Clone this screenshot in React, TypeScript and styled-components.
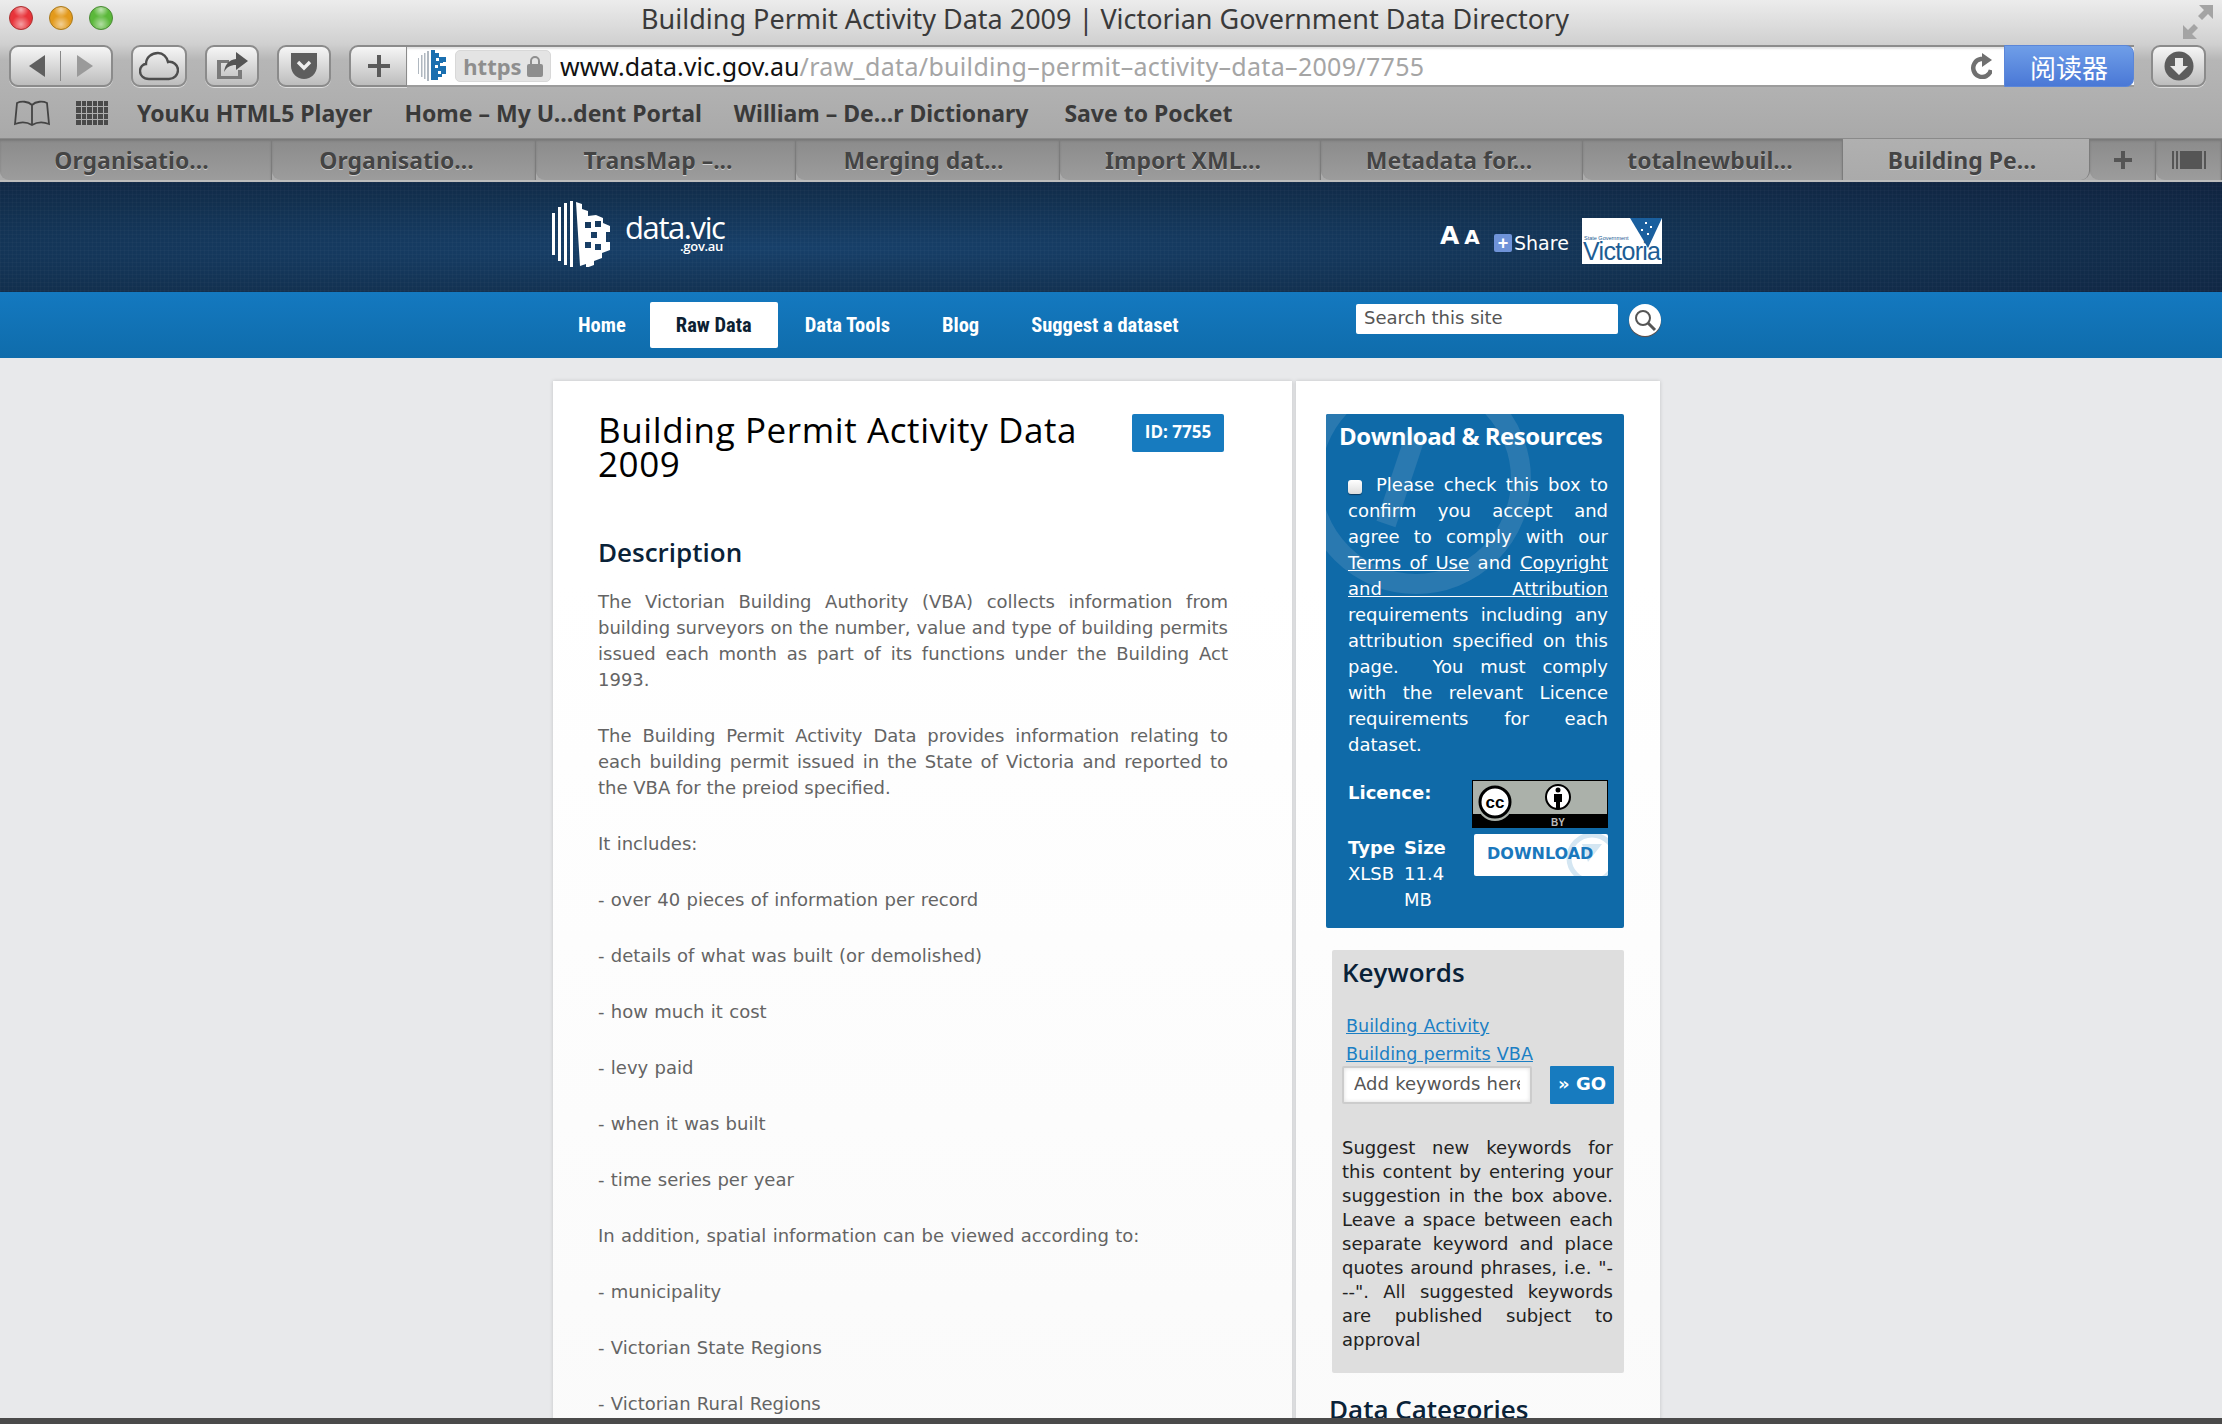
import React from "react";
import styled, { createGlobalStyle } from "styled-components";

const GlobalStyle = createGlobalStyle`
  html, body { margin: 0; padding: 0; height: 100%; overflow: hidden; }
  * { box-sizing: border-box; }
`;

const CHROME_FONT = `"Noto Sans", "Open Sans", sans-serif`;
const BODY_FONT = `"DejaVu Sans", Verdana, sans-serif`;
const HEAD_FONT = `"Open Sans", "Noto Sans", sans-serif`;

const Window = styled.div`
  width: 2222px;
  height: 1424px;
  display: flex;
  flex-direction: column;
  overflow: hidden;
  background: #e8e9eb;
`;

const TopChrome = styled.div`
  flex: none;
  background: linear-gradient(#ececec 0, #d0d0d0 44px, #b6b6b6 60px, #a9a9a9 138px);
`;

const TitleBar = styled.div`
  height: 44px;
  display: flex;
  align-items: center;
  position: relative;
  padding-bottom: 8px;
  font: 400 27px ${CHROME_FONT};
  color: #3a3a3a;
`;

const Lights = styled.div`
  display: flex;
  gap: 16px;
  padding-left: 9px;
`;

const Light = styled.span<{ $c: string; $d: string }>`
  width: 24px;
  height: 24px;
  border-radius: 50%;
  border: 1px solid ${(p) => p.$d};
  background: radial-gradient(circle at 50% 78%, #fff8 0, transparent 45%),
    radial-gradient(circle at 50% 12%, #fff9 0, transparent 35%), ${(p) => p.$c};
`;

const WindowTitle = styled.div`
  flex: 1;
  text-align: center;
  padding-right: 86px;
  white-space: nowrap;
`;

const Fullscreen = styled.svg`
  margin-right: 9px;
  margin-top: 8px;
`;

const Toolbar = styled.div`
  height: 44px;
  display: flex;
  align-items: flex-start;
  padding: 1px 16px 0 9px;
`;

const ToolButton = styled.div<{ $w: number; $ml?: number }>`
  width: ${(p) => p.$w}px;
  height: 42px;
  margin-left: ${(p) => p.$ml ?? 0}px;
  flex: none;
  display: flex;
  align-items: center;
  justify-content: center;
  border: 2px solid #8b8b8b;
  border-radius: 9px;
  background: linear-gradient(#f6f6f6, #bdbdbd);
  box-shadow: 0 1px 0 #ddd;
`;

const BackForward = styled(ToolButton)`
  justify-content: space-around;
  padding: 0 10px;
`;

const VDivider = styled.span`
  width: 1px;
  height: 30px;
  background: #888;
`;

const PlusButton = styled(ToolButton)`
  border-radius: 9px 0 0 9px;
  border-right-width: 1px;
`;

const AddressBar = styled.div`
  flex: none;
  width: 1727px;
  height: 42px;
  display: flex;
  align-items: center;
  background: #fff;
  border-top: 2px solid #8c8c8c;
  border-bottom: 2px solid #9c9c9c;
  box-shadow: inset 0 2px 2px #e4e4e4;
  padding-left: 10px;
`;

const HttpsPill = styled.div`
  margin-left: 8px;
  width: 96px;
  height: 32px;
  display: flex;
  align-items: center;
  justify-content: center;
  gap: 5px;
  background: #e4e4e4;
  border: 1px solid #d8d8d8;
  border-radius: 5px;
  font: 700 22px ${CHROME_FONT};
  color: #8e8e8e;
`;

const Url = styled.div`
  margin-left: 9px;
  font: 400 25px ${CHROME_FONT};
  color: #111;
  white-space: nowrap;
  flex: 1;
`;

const UrlPath = styled.span`
  color: #a5a5a5;
  letter-spacing: 0.32px;
`;

const ReaderButton = styled.div`
  flex: none;
  width: 130px;
  height: 42px;
  margin: -2px 0;
  display: flex;
  align-items: center;
  justify-content: center;
  border-radius: 0 8px 8px 0;
  background: linear-gradient(#6f9ee8, #4a78d6);
  border: 1px solid #5b86d8;
  color: #fff;
  font: 400 26px "Noto Sans CJK SC", sans-serif;
`;

const ReloadIcon = styled.svg`
  margin-right: 12px;
  flex: none;
`;

const BookmarksBar = styled.div`
  height: 50px;
  display: flex;
  align-items: center;
  padding-left: 14px;
  font: 700 23px ${CHROME_FONT};
  color: #3a3a3a;
  white-space: nowrap;
`;

const BookmarkLink = styled.span<{ $ml: number }>`
  margin-left: ${(p) => p.$ml}px;
`;

const GridIcon = styled.span`
  margin-left: 26px;
  width: 32px;
  height: 24px;
  display: grid;
  grid-template-columns: repeat(6, 1fr);
  gap: 1px;
`;

const GridDot = styled.i`
  background: #4a4a4a;
`;

const TabStrip = styled.div`
  height: 44px;
  display: flex;
  border-top: 1px solid #8a8a8a;
  background: #ababab;
  border-bottom: 2px solid #bdbdbd;
  font: 700 23px ${CHROME_FONT};
  color: #444;
  text-shadow: 0 1px 0 #d0d0d0;
`;

const Tab = styled.div<{ $w: number; $active?: boolean; $pr?: number }>`
  flex: none;
  width: ${(p) => p.$w}px;
  display: flex;
  align-items: center;
  justify-content: center;
  padding-right: ${(p) => p.$pr ?? 0}px;
  white-space: nowrap;
  background: ${(p) => (p.$active ? "linear-gradient(#b0b0b0, #aaa)" : "linear-gradient(#8b8b8b, #9c9c9c)")};
  border-right: 1px solid #7c7c7c;
  border-radius: 0 0 ${(p) => (p.$active ? "9px 9px" : "0 9px")};
  box-shadow: ${(p) => (p.$active ? "none" : "inset 0 2px 2px #7a7a7a")};
`;

const Header = styled.header`
  flex: none;
  height: 110px;
  padding-left: 551px;
  display: flex;
  width: 2222px;
  background-color: #11294a;
  background-image: linear-gradient(rgba(255, 255, 255, 0.018) 1px, transparent 1px),
    linear-gradient(90deg, rgba(255, 255, 255, 0.018) 1px, transparent 1px),
    radial-gradient(ellipse at 35% 60%, #17406a 0, #12304f 55%, #10233f 100%);
  background-size: 4px 4px, 4px 4px, 100% 100%;
`;

const HeaderInner = styled.div`
  width: 1111px;
  display: flex;
  align-items: flex-start;
`;

const LogoMark = styled.svg`
  margin-top: 19px;
  flex: none;
`;

const LogoWords = styled.div`
  margin: 31px 0 0 14px;
  width: 98px;
  color: #fff;
  font: 400 31px/28px ${HEAD_FONT};
  letter-spacing: -1.4px;
  text-align: right;
  white-space: nowrap;
`;

const LogoSub = styled.div`
  font: 600 13px/12px ${HEAD_FONT};
  letter-spacing: -0.3px;
  margin-top: -1px;
`;

const HeaderTools = styled.div`
  margin-left: auto;
  display: flex;
  align-items: flex-start;
  color: #fff;
`;

const TextSize = styled.div`
  margin-top: 40px;
  width: 54px;
  display: flex;
  align-items: baseline;
  gap: 5px;
  font: 700 25px/28px "DejaVu Sans", sans-serif;
`;

const TextSizeSmall = styled.span`
  font-size: 20px;
`;

const ShareBlock = styled.div`
  margin-top: 51px;
  display: flex;
  align-items: center;
  gap: 2px;
  font: 400 19px/20px ${BODY_FONT};
  width: 88px;
`;

const ShareSquare = styled.span`
  width: 18px;
  height: 18px;
  border-radius: 2px;
  background: #6f93d8;
  display: flex;
  align-items: center;
  justify-content: center;
  font: 700 18px/18px "Liberation Sans", sans-serif;
`;

const VictoriaLogo = styled.div`
  margin-top: 36px;
  width: 80px;
  height: 46px;
  background: #fff;
  position: relative;
  overflow: hidden;
  color: #1d5d94;
`;

const VictoriaTriangle = styled.svg`
  position: absolute;
  right: 0;
  top: 0;
`;

const VictoriaSmall = styled.div`
  position: absolute;
  left: 2px;
  top: 17px;
  font: 400 5.5px/6px "Liberation Sans", sans-serif;
`;

const VictoriaBig = styled.div`
  position: absolute;
  left: 1px;
  top: 20px;
  font: 400 25px/26px "Liberation Sans", sans-serif;
  letter-spacing: -0.7px;
`;

const NavBar = styled.nav`
  flex: none;
  height: 66px;
  padding: 10px 0 0 553px;
  background: linear-gradient(#1479c0, #0f6cab);
  display: flex;
  align-items: flex-start;
`;

const NavList = styled.div`
  display: flex;
  gap: 2px;
`;

const NavItem = styled.a<{ $active?: boolean }>`
  display: block;
  height: 46px;
  padding: 0 ${(p) => (p.$active ? 26 : 25)}px;
  font: 700 20.5px/46px "Liberation Sans Narrow", "Roboto Condensed", "Liberation Sans", sans-serif;
  color: ${(p) => (p.$active ? "#0c1f33" : "#fff")};
  background: ${(p) => (p.$active ? "#fff" : "transparent")};
  border-radius: 2px;

  &:first-child {
    margin-right: -3px;
  }
`;

const SearchBox = styled.div`
  position: absolute;
  left: 1356px;
  top: 304px;
  display: flex;
  gap: 11px;
`;

const SearchField = styled.div`
  width: 262px;
  height: 30px;
  background: #fff;
  border-radius: 2px;
  padding-left: 8px;
  font: 400 18px/28px ${BODY_FONT};
  color: #555;
`;

const SearchButton = styled.div`
  width: 32px;
  height: 32px;
  border-radius: 50%;
  background: #fff;
  box-shadow: 0 1px 1px #6b4a3a;
  display: flex;
  align-items: center;
  justify-content: center;
`;

const Content = styled.main`
  flex: 1;
  min-height: 0;
  overflow: hidden;
  display: flex;
  align-items: flex-start;
  gap: 4px;
  padding: 23px 0 0 553px;
`;

const Card = styled.section<{ $w: number }>`
  flex: none;
  width: ${(p) => p.$w}px;
  height: 1100px;
  background: linear-gradient(#fff 0, #fff 200px, #fafafa 100%);
  box-shadow: 0 0 4px rgba(0, 0, 0, 0.16);
`;

const MainCard = styled(Card)`
  padding: 33px 64px 0 45px;
  font: 400 18px/26px ${BODY_FONT};
  color: #646464;
`;

const TitleRow = styled.div`
  display: flex;
  justify-content: space-between;
  align-items: flex-start;
`;

const PageTitle = styled.h1`
  width: 500px;
  margin: -1px 0 0;
  font: 500 35px/34px ${HEAD_FONT};
  letter-spacing: 0.6px;
  color: #000;
`;

const IdBadge = styled.div`
  margin-right: 4px;
  width: 92px;
  height: 38px;
  border-radius: 2px;
  background: #177bbf;
  color: #fff;
  font: 700 17px/36px ${HEAD_FONT};
  text-align: center;
`;

const SectionHeading = styled.h2`
  margin: 53px 0 19px;
  font: 600 26px/36px ${HEAD_FONT};
  color: #0a2238;
`;

const Para = styled.p`
  margin: 0 0 30px;
  text-align: justify;
`;

const ListLine = styled(Para)`
  word-spacing: 0.6px;
`;

const SideCard = styled(Card)`
  padding: 33px 36px 0 30px;
`;

const ResourceBox = styled.div`
  position: relative;
  overflow: hidden;
  width: 298px;
  height: 514px;
  border-radius: 2px;
  background: #0f6aa8;
  color: #fff;
  padding: 0 16px 0 22px;
  font: 400 18px/26px ${BODY_FONT};
  word-spacing: 0.6px;
`;

const Watermark = styled.svg`
  position: absolute;
  left: 0;
  top: 0;
`;

const ResourceHeading = styled.h3`
  position: relative;
  margin: 0 -16px 17px -9px;
  padding-top: 4px;
  padding-bottom: 1px;
  font: 700 24px/36px ${HEAD_FONT};
  letter-spacing: -0.5px;
  word-spacing: 0;
  white-space: nowrap;
`;

const ResourceText = styled.p`
  position: relative;
  margin: 0;
  text-align: justify;
`;

const Check = styled.span`
  display: inline-block;
  width: 14px;
  height: 14px;
  margin: 0 14px -3px 0;
  border-radius: 3px;
  background: linear-gradient(#fff, #ddd);
  box-shadow: 0 1px 1px #0a3a60;
`;

const WhiteLink = styled.a`
  color: #fff;
  text-decoration: underline;
`;

const LicenceRow = styled.div`
  position: relative;
  display: flex;
  justify-content: space-between;
  align-items: flex-start;
  margin-top: 22px;
`;

const BoldLabel = styled.b`
  font-weight: 700;
`;

const InfoRow = styled.div`
  position: relative;
  display: flex;
  justify-content: space-between;
  align-items: flex-start;
  margin-top: 6px;
`;

const TypeGrid = styled.div`
  display: grid;
  grid-template-columns: 56px 46px;
  padding-top: 1px;
`;

const DownloadButton = styled.div`
  position: relative;
  overflow: hidden;
  width: 134px;
  height: 42px;
  border-radius: 2px;
  background: #fff;
  color: #1a78bd;
  padding-left: 13px;
`;

const DownloadLabel = styled.span`
  position: relative;
  font: 700 16px/40px ${BODY_FONT};
`;

const DownloadMark = styled.svg`
  position: absolute;
  right: 0;
  top: 0;
`;

const KeywordBox = styled.div`
  margin: 22px 0 0 6px;
  width: 292px;
  height: 423px;
  border-radius: 2px;
  background: #dedede;
  padding: 4px 11px 0 10px;
  font: 400 18px/24px ${BODY_FONT};
  word-spacing: 0.6px;
  color: #222;
`;

const KeywordHeading = styled.h3`
  margin: 0 0 22px;
  font: 600 26px/36px ${HEAD_FONT};
  word-spacing: 0;
  color: #0a2238;
`;

const KeywordLinks = styled.div`
  padding-left: 4px;
  line-height: 28px;
  font-size: 17.6px;
`;

const KeywordLink = styled.a`
  color: #1b7fc4;
  text-decoration: underline;
`;

const KeywordForm = styled.div`
  display: flex;
  justify-content: space-between;
  margin: -2px -1px 0 0;
`;

const KeywordInput = styled.div`
  width: 190px;
  height: 38px;
  border: 2px solid #ccc;
  background: #fff;
  box-shadow: inset 0 0 4px #ddd;
  border-radius: 2px;
  padding: 0 10px 0 10px;
  color: #555;
  font: 400 18px/32px ${BODY_FONT};
  white-space: nowrap;
`;

const InputClip = styled.div`
  overflow: hidden;
`;

const GoButton = styled.div`
  width: 64px;
  height: 38px;
  background: #177bbf;
  color: #fff;
  font: 700 18px/36px ${BODY_FONT};
  word-spacing: 0;
  text-align: center;
  border-radius: 1px;
`;

const KeywordHelp = styled.p`
  margin: 32px 0 0;
  text-align: justify;
`;

const CategoriesHeading = styled.h3`
  margin: 18px 0 0 3px;
  font: 600 26px/36px ${HEAD_FONT};
  color: #0a2238;
`;

const StatusLine = styled.div`
  flex: none;
  height: 6px;
  background: #4a4a4a;
`;

const tabs = [
  { t: "Organisatio...", w: 272, pr: 8 },
  { t: "Organisatio...", w: 264, pr: 14 },
  { t: "TransMap –...", w: 260, pr: 15 },
  { t: "Merging dat...", w: 264, pr: 8 },
  { t: "Import XML...", w: 261, pr: 14 },
  { t: "Metadata for...", w: 262, pr: 5 },
  { t: "totalnewbuil...", w: 260, pr: 5 },
  { t: "Building Pe...", w: 247, pr: 8, active: true },
];

const bullets = [
  "It includes:",
  "- over 40 pieces of information per record",
  "- details of what was built (or demolished)",
  "- how much it cost",
  "- levy paid",
  "- when it was built",
  "- time series per year",
  "In addition, spatial information can be viewed according to:",
  "- municipality",
  "- Victorian State Regions",
  "- Victorian Rural Regions",
];

const App = () => {
  return (
    <Window>
      <GlobalStyle />
      <TopChrome>
        <TitleBar>
          <Lights>
            <Light $c="#e8343a" $d="#a33" />
            <Light $c="#e39a1c" $d="#a87a20" />
            <Light $c="#5bb83a" $d="#4c8a38" />
          </Lights>
          <WindowTitle>Building Permit Activity Data 2009 | Victorian Government Data Directory</WindowTitle>
          <Fullscreen width="30" height="34" viewBox="0 0 30 34" fill="#a4a4a4">
            <path d="M30 0v14l-5-5-6 6-4-4 6-6-5-5zM0 34V20l5 5 6-6 4 4-6 6 5 5z" />
          </Fullscreen>
        </TitleBar>
        <Toolbar>
          <BackForward $w={104}>
            <svg width="18" height="24" viewBox="0 0 18 24"><path d="M17 1v22L1 12z" fill="#5f5f5f" /></svg>
            <VDivider />
            <svg width="18" height="24" viewBox="0 0 18 24"><path d="M1 1v22l16-11z" fill="#9a9a9a" /></svg>
          </BackForward>
          <ToolButton $w={56} $ml={18}>
            <svg width="40" height="30" viewBox="0 0 40 30" fill="none" stroke="#4d4d4d" strokeWidth="2.4">
              <path d="M10 28C4 28 1 24 1 20c0-4 3-7 6-7 0-7 6-11 12-11 5 0 9 4 10 9 5-1 10 3 10 8 0 5-4 9-9 9z" />
            </svg>
          </ToolButton>
          <ToolButton $w={54} $ml={18}>
            <svg width="34" height="28" viewBox="0 0 34 28">
              <path d="M2 8h12v3H6v13h17v-6h4v9H2z" fill="#7a7a7a" />
              <path d="M21 0l12 9-12 9v-5c-6 0-9 2-12 7 1-8 5-12 12-13z" fill="#555" />
            </svg>
          </ToolButton>
          <ToolButton $w={54} $ml={18}>
            <svg width="28" height="28" viewBox="0 0 28 28">
              <path d="M1 1h26v13c0 7-6 13-13 13S1 21 1 14z" fill="#5e5e5e" />
              <path d="M8 10l6 6 6-6" fill="none" stroke="#eee" strokeWidth="3.4" />
            </svg>
          </ToolButton>
          <PlusButton $w={58} $ml={18}>
            <svg width="22" height="22" viewBox="0 0 22 22"><path d="M9 0h4v9h9v4h-9v9H9v-9H0V9h9z" fill="#5a5a5a" /></svg>
          </PlusButton>
          <AddressBar>
            <svg width="30" height="32" viewBox="0 0 30 32">
              <path d="M1 8h1v16H1zM4 5h1.500v22H4zM7 3h1.500v26H7zM10 1h2v30h-2z" fill="#b0b8c0" />
              <path d="M14 0h4v3h4v4h7v5h-3v4h3v8h-4v3h-4v3h-7z" fill="#1a6fb0" />
              <path d="M19 8h3v3h-3zM23 13h3v3h-3zM18 15h3v3h-3zM21 21h3v3h-3z" fill="#fff" />
            </svg>
            <HttpsPill>
              https
              <svg width="16" height="22" viewBox="0 0 16 22">
                <path d="M4 9V6a4 4 0 0 1 8 0v3" fill="none" stroke="#8e8e8e" strokeWidth="2" />
                <rect x="0" y="9" width="16" height="13" rx="2" fill="#8e8e8e" />
              </svg>
            </HttpsPill>
            <Url>
              www.data.vic.gov.au<UrlPath>/raw_data/building–permit–activity–data–2009/7755</UrlPath>
            </Url>
            <ReloadIcon width="22" height="26" viewBox="0 0 22 26">
              <path d="M18 8a9 9 0 1 0 3 9" fill="none" stroke="#707070" strokeWidth="4.5" />
              <path d="M12 0l10 7-10 7z" fill="#707070" />
            </ReloadIcon>
            <ReaderButton>阅读器</ReaderButton>
          </AddressBar>
          <ToolButton $w={55} $ml={17}>
            <svg width="30" height="30" viewBox="0 0 30 30">
              <circle cx="15" cy="15" r="14.500" fill="#5c5c5c" />
              <path d="M11 7h8v8h5l-9 9-9-9h5z" fill="#e8e8e8" />
            </svg>
          </ToolButton>
        </Toolbar>
        <BookmarksBar>
          <svg width="36" height="26" viewBox="0 0 36 26" fill="none" stroke="#444" strokeWidth="1.800">
            <path d="M18 5C14 1 7 1 3 3L1 24c5-2 12-2 17 1 5-3 12-3 17-1L33 3c-4-2-11-2-15 2zM18 5v20" />
          </svg>
          <GridIcon>
            {Array.from({ length: 24 }).map((_, i) => (
              <GridDot key={i} />
            ))}
          </GridIcon>
          <BookmarkLink $ml={29}>YouKu HTML5 Player</BookmarkLink>
          <BookmarkLink $ml={32}>Home – My U...dent Portal</BookmarkLink>
          <BookmarkLink $ml={32}>William – De...r Dictionary</BookmarkLink>
          <BookmarkLink $ml={36}>Save to Pocket</BookmarkLink>
        </BookmarksBar>
        <TabStrip>
          {tabs.map((tab, i) => (
            <Tab key={i} $w={tab.w} $pr={tab.pr} $active={tab.active}>
              {tab.t}
            </Tab>
          ))}
          <Tab $w={66}>
            <svg width="18" height="18" viewBox="0 0 18 18"><path d="M7 0h4v7h7v4h-7v7H7v-7H0V7h7z" fill="#555" /></svg>
          </Tab>
          <Tab $w={66}>
            <svg width="34" height="18" viewBox="0 0 34 18" fill="#555">
              <path d="M0 0h2v18H0zM4 0h2v18H4zM8 0h22v18H8zM32 0h2v18h-2z" />
            </svg>
          </Tab>
        </TabStrip>
      </TopChrome>

      <Header>
        <HeaderInner>
          <LogoMark width="60" height="66" viewBox="0 0 60 66" fill="#fff">
            <path d="M1 12h3v42H1zM7 6h3v54H7zM13 2h3v62h-3zM19 0h3v66h-3z" />
            <path fillRule="evenodd" d="M25 1l6 2v5l6 2v5l8-1 7 3v5l7 3v6h-4v10h4v8l-8 3v5l-8 3v4l-8 3v-4l-6 2zM34 21v6h6v-6zM44 20v6h6v-6zM40 31v6h6v-6zM34 41v6h6v-6zM44 43v6h6v-6z" />
          </LogoMark>
          <LogoWords>
            data.vic
            <LogoSub>.gov.au</LogoSub>
          </LogoWords>
          <HeaderTools>
            <TextSize>
              A<TextSizeSmall>A</TextSizeSmall>
            </TextSize>
            <ShareBlock>
              <ShareSquare>+</ShareSquare>Share
            </ShareBlock>
            <VictoriaLogo>
              <VictoriaTriangle width="32" height="30" viewBox="0 0 32 30">
                <path d="M0 0h32L18 30z" fill="#1a5f9e" />
                <path d="M15 4h2v2h-2zM20 8h2v2h-2zM11 11h2v2h-2zM17 15h2v2h-2z" fill="#fff" />
              </VictoriaTriangle>
              <VictoriaSmall>State Government</VictoriaSmall>
              <VictoriaBig>Victoria</VictoriaBig>
            </VictoriaLogo>
          </HeaderTools>
        </HeaderInner>
      </Header>

      <NavBar>
        <NavList>
          <NavItem>Home</NavItem>
          <NavItem $active>Raw Data</NavItem>
          <NavItem>Data Tools</NavItem>
          <NavItem>Blog</NavItem>
          <NavItem>Suggest a dataset</NavItem>
        </NavList>
      </NavBar>
      <SearchBox>
        <SearchField>Search this site</SearchField>
        <SearchButton>
          <svg width="24" height="24" viewBox="0 0 24 24" fill="none" stroke="#555">
            <circle cx="10" cy="10" r="7" strokeWidth="2" />
            <path d="M15 15l7 7" strokeWidth="3" />
          </svg>
        </SearchButton>
      </SearchBox>

      <Content>
        <MainCard $w={739}>
          <TitleRow>
            <PageTitle>Building Permit Activity Data 2009</PageTitle>
            <IdBadge>ID: 7755</IdBadge>
          </TitleRow>
          <SectionHeading>Description</SectionHeading>
          <Para>
            The Victorian Building Authority (VBA) collects information from building surveyors on the number, value and
            type of building permits issued each month as part of its functions under the Building Act 1993.
          </Para>
          <Para>
            The Building Permit Activity Data provides information relating to each building permit issued in the State
            of Victoria and reported to the VBA for the preiod specified.
          </Para>
          {bullets.map((line) => (
            <ListLine key={line}>{line}</ListLine>
          ))}
        </MainCard>

        <SideCard $w={364}>
          <ResourceBox>
            <Watermark width="298" height="514" viewBox="0 0 298 514" fill="none" stroke="#2a79b0" strokeWidth="20">
              <circle cx="90" cy="65" r="105" />
              <path d="M90 20L60 110" />
            </Watermark>
            <ResourceHeading>Download &amp; Resources</ResourceHeading>
            <ResourceText>
              <Check />
              Please check this box to confirm you accept and agree to comply with our{" "}
              <WhiteLink>Terms of Use</WhiteLink> and <WhiteLink>Copyright and Attribution</WhiteLink> requirements
              including any attribution specified on this page.&nbsp; You must comply with the relevant Licence
              requirements for each dataset.
            </ResourceText>
            <LicenceRow>
              <BoldLabel>Licence:</BoldLabel>
              <svg width="136" height="48" viewBox="0 0 136 48">
                <rect width="136" height="48" fill="#000" />
                <rect x="1" y="1" width="134" height="33" fill="#abb1aa" />
                <circle cx="23" cy="23" r="18" fill="#abb1aa" />
                <circle cx="23" cy="22" r="15" fill="#fff" stroke="#000" strokeWidth="3" />
                <text x="23" y="28" textAnchor="middle" fontFamily="Liberation Sans" fontWeight="700" fontSize="17" fill="#000">cc</text>
                <circle cx="86" cy="17" r="12" fill="#fff" stroke="#000" strokeWidth="2" />
                <circle cx="86" cy="10" r="2.500" fill="#000" />
                <path d="M82 14h8v8h-2v6h-4v-6h-2z" fill="#000" />
                <text x="86" y="46" textAnchor="middle" fontFamily="Liberation Sans" fontWeight="700" fontSize="10" fill="#bbb">BY</text>
              </svg>
            </LicenceRow>
            <InfoRow>
              <TypeGrid>
                <BoldLabel>Type</BoldLabel>
                <BoldLabel>Size</BoldLabel>
                <span>XLSB</span>
                <span>11.4 MB</span>
              </TypeGrid>
              <DownloadButton>
                <DownloadMark width="50" height="42" viewBox="0 0 50 42" fill="none" stroke="#d4e6f2" strokeWidth="5">
                  <circle cx="34" cy="24" r="23" />
                  <path d="M24 10l6 18 14-18" fill="#d4e6f2" stroke="none" />
                </DownloadMark>
                <DownloadLabel>DOWNLOAD</DownloadLabel>
              </DownloadButton>
            </InfoRow>
          </ResourceBox>

          <KeywordBox>
            <KeywordHeading>Keywords</KeywordHeading>
            <KeywordLinks>
              <KeywordLink>Building Activity</KeywordLink>
              <br />
              <KeywordLink>Building permits</KeywordLink> <KeywordLink>VBA</KeywordLink>
            </KeywordLinks>
            <KeywordForm>
              <KeywordInput>
                <InputClip>Add keywords here</InputClip>
              </KeywordInput>
              <GoButton>» GO</GoButton>
            </KeywordForm>
            <KeywordHelp>
              Suggest new keywords for this content by entering your suggestion in the box above. Leave a space between
              each separate keyword and place quotes around phrases, i.e. "---". All suggested keywords are published
              subject to approval
            </KeywordHelp>
          </KeywordBox>
          <CategoriesHeading>Data Categories</CategoriesHeading>
        </SideCard>
      </Content>
      <StatusLine />
    </Window>
  );
};

export default App;
